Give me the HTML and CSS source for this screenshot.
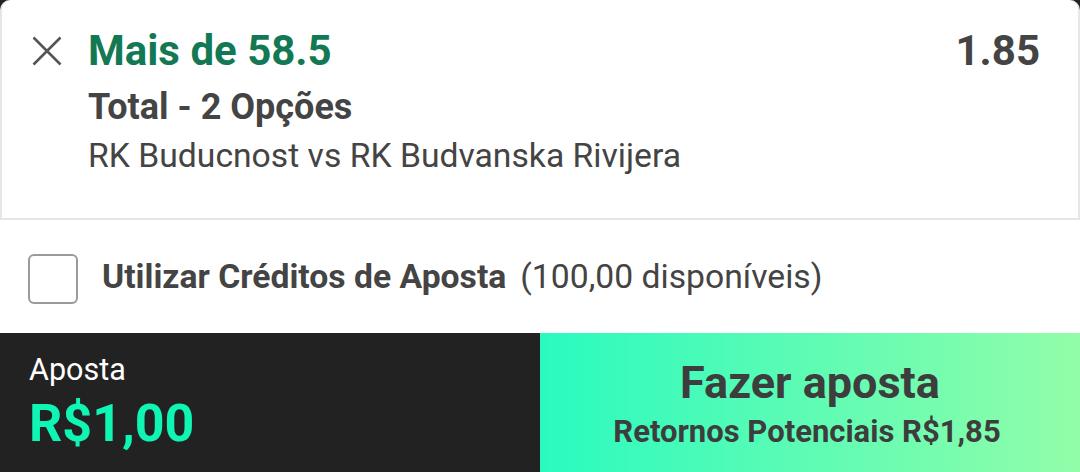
FILE: index.html
```html
<!DOCTYPE HTML>
<html>
	<head>
		<title>Boletim</title>
		<meta charset="utf-8">
		<link rel="stylesheet" href="styles.css">
	</head>
	<body>
		<div id="slip">
			<div id="pick">
				<svg class="close_icon" width="30" height="30" viewBox="0 0 30 30">
					<path d="M1.5 1.5 L28.5 28.5 M28.5 1.5 L1.5 28.5" stroke="#555" stroke-width="2.6" fill="none" />
				</svg>
				<div id="pick_details">
					<div class="pick_title">Mais de 58.5</div>
					<div class="pick_market">Total - 2 Opções</div>
					<div class="pick_event">RK Buducnost vs RK Budvanska Rivijera</div>
				</div>
				<div class="pick_odds">1.85</div>
			</div>
			<div id="credits">
				<span class="checkbox"></span>
				<span class="credits_label">Utilizar Créditos de Aposta</span>
				<span class="credits_available">(100,00 disponíveis)</span>
			</div>
			<div id="bet_bar">
				<div id="stake">
					<div class="stake_label">Aposta</div>
					<div class="stake_value">R$1,00</div>
				</div>
				<div id="place_bet">
					<div class="place_title">Fazer aposta</div>
					<div class="place_returns">Retornos Potenciais R$1,85</div>
				</div>
			</div>
		</div>
	</body>
</html>
```

FILE: styles.css
```css
html, body {
	margin: 0px;
	padding: 0px;
	width: 100%;
	height: 100%;
}

body {
	background: linear-gradient(#222 0px, #222 12px, #fff 12px);
	font-family: Roboto, "Noto Sans", sans-serif;
	color: #444;
	overflow: hidden;
}

#slip {
	width: 1080px;
	height: 472px;
	display: flex;
	flex-direction: column;
}

#pick {
	height: 220px;
	box-sizing: border-box;
	background-color: #fff;
	border: 2px solid #e6e6e6;
	border-top: none;
	border-radius: 10px 10px 0 0;
	display: flex;
	align-items: flex-start;
	padding: 0px 38px 0px 30px;
	flex-shrink: 0;
}

.close_icon {
	flex-shrink: 0;
	margin-top: 36px;
	margin-right: 26px;
}

#pick_details {
	flex-grow: 1;
	padding-top: 21px;
}

.pick_title {
	font-size: 42px;
	line-height: 60px;
	font-weight: bold;
	color: #137955;
}

.pick_market {
	font-size: 36px;
	line-height: 48px;
	font-weight: bold;
	margin-top: 2px;
}

.pick_event {
	font-size: 33.7px;
	line-height: 44px;
	margin-top: 3px;
}

.pick_odds {
	font-size: 42px;
	line-height: 60px;
	font-weight: bold;
	padding-top: 21px;
}

#credits {
	height: 113px;
	display: flex;
	align-items: center;
	padding-left: 28px;
	background-color: #fff;
	flex-shrink: 0;
}

.checkbox {
	width: 50px;
	height: 50px;
	box-sizing: border-box;
	border: 2px solid #9a9a9a;
	border-radius: 6px;
	margin-right: 24px;
	margin-top: 4px;
}

.credits_label {
	font-size: 33.7px;
	font-weight: bold;
}

.credits_available {
	font-size: 33.7px;
	margin-left: 14px;
}

#bet_bar {
	flex-grow: 1;
	display: flex;
}

#stake {
	width: 540px;
	background-color: #222;
	padding: 19px 0px 0px 29px;
	box-sizing: border-box;
}

.stake_label {
	font-size: 30.5px;
	line-height: 36px;
	color: #fff;
}

.stake_value {
	font-size: 52px;
	line-height: 56px;
	font-weight: bold;
	color: #0ff5b4;
	margin-top: 8px;
}

#place_bet {
	width: 540px;
	background: linear-gradient(to right, #2afabf, #92fda9);
	text-align: center;
	padding-top: 25px;
	box-sizing: border-box;
	color: #3d3d3d;
}

.place_title {
	font-size: 45px;
	line-height: 50px;
	font-weight: bold;
}

.place_returns {
	font-size: 31px;
	line-height: 34px;
	font-weight: bold;
	margin-top: 7px;
	padding-right: 6px;
}
```
